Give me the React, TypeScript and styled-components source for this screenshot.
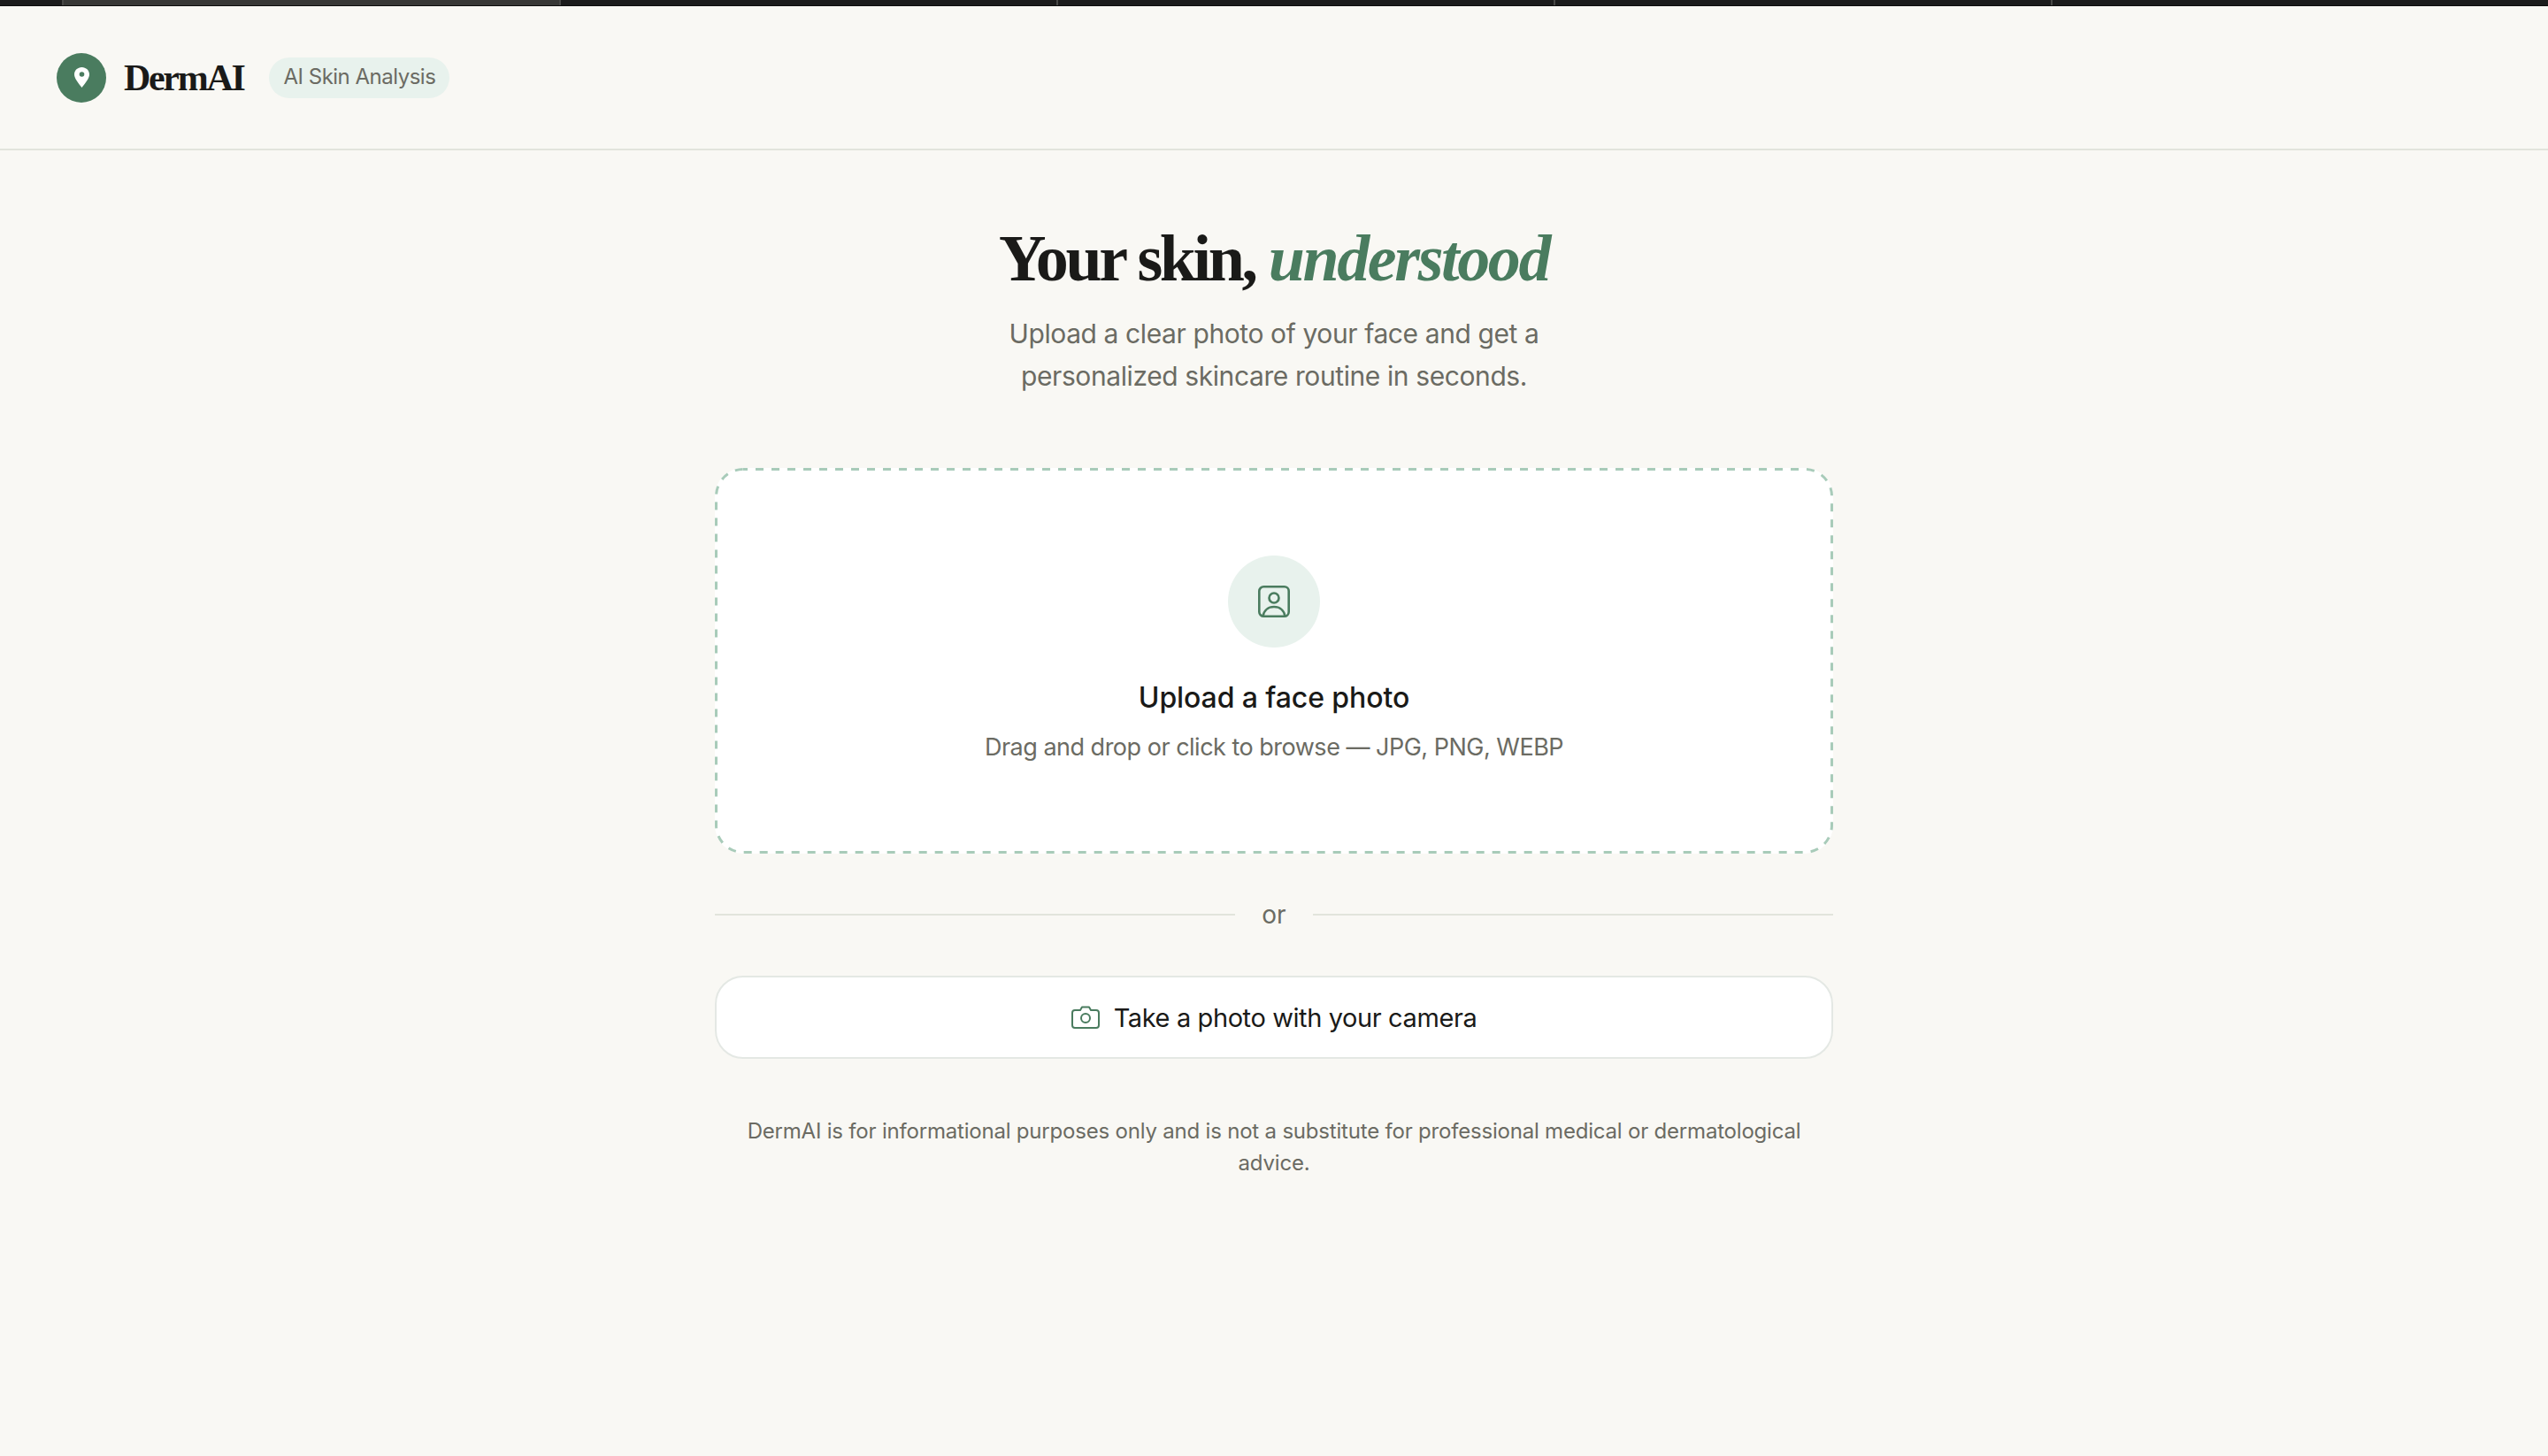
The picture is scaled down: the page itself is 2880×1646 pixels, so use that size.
import React from 'react';
import styled, { createGlobalStyle } from 'styled-components';

const sans = '"Inter", "Noto Sans", sans-serif';
const serif = '"Liberation Serif", "DejaVu Serif", serif';

const App: React.FC = () => {
  return (
    <>
      <GlobalStyle />
      <Page>
        <Progress>
          <Segment $first />
          <Segment $active />
          <Segment />
          <Segment />
          <Segment />
          <Segment />
        </Progress>
        <Header>
          <LogoMark>
            <svg width="17" height="23" viewBox="0 0 17 23">
              <path d="M8.5 0C3.800 0 0 3.600 0 8.200 0 12.500 5 18.500 8.500 23 12 18.500 17 12.500 17 8.200 17 3.600 13.200 0 8.500 0z" fill="#fff" />
              <circle cx="8.500" cy="8" r="2.800" fill="#4a7c5f" />
            </svg>
          </LogoMark>
          <Brand>DermAI</Brand>
          <Badge>AI Skin Analysis</Badge>
        </Header>
        <Main>
          <Heading>
            Your skin, <em>understood</em>
          </Heading>
          <Lead>
            Upload a clear photo of your face and get a
            <br />
            personalized skincare routine in seconds.
          </Lead>
          <DropZone>
            <DashedEdge>
              <rect x="1.500" y="1.500" width="1261" height="433" rx="30.500" />
            </DashedEdge>
            <IconCircle>
              <svg width="36" height="36" viewBox="0 0 36 36" fill="none" stroke="#4a7c5f" strokeWidth="2.600">
                <rect x="1.300" y="1.300" width="33.400" height="33.400" rx="5" />
                <circle cx="18" cy="14" r="5.500" />
                <path d="M5.500 35c1-7 6-11 12.500-11s11.500 4 12.500 11" />
              </svg>
            </IconCircle>
            <DropTitle>Upload a face photo</DropTitle>
            <DropHint>Drag and drop or click to browse — JPG, PNG, WEBP</DropHint>
          </DropZone>
          <Divider>or</Divider>
          <CameraButton>
            <svg width="32" height="26" viewBox="0 0 32 26" fill="none" stroke="#4a7c5f" strokeWidth="2" strokeLinejoin="round">
              <path d="M10 5l2-3.500h8L22 5h6a3 3 0 0 1 3 3v14a3 3 0 0 1-3 3H4a3 3 0 0 1-3-3V8a3 3 0 0 1 3-3z" />
              <circle cx="16" cy="14" r="5" />
            </svg>
            Take a photo with your camera
          </CameraButton>
          <Disclaimer>
            DermAI is for informational purposes only and is not a substitute for professional medical or dermatological advice.
          </Disclaimer>
        </Main>
      </Page>
    </>
  );
};

const GlobalStyle = createGlobalStyle`
  html, body {
    margin: 0;
    padding: 0;
    background: #f9f8f4;
  }
`;

const Page = styled.div`
  min-height: 1646px;
  background: #f9f8f4;
  font-family: ${sans};
  color: #1a1a18;
`;

const Progress = styled.div`
  display: flex;
  box-sizing: border-box;
  height: 7px;
  gap: 2px;
  background: #484846;
  border-bottom: 1px solid #0c0c0c;
`;

const Segment = styled.div<{ $first?: boolean; $active?: boolean }>`
  flex: ${(p) => (p.$first ? '0 0 70px' : '1 1 0')};
  background: ${(p) => (p.$active ? '#383836' : '#1c1c1c')};
`;

const Header = styled.header`
  display: flex;
  align-items: center;
  height: 161px;
  padding: 0 64px;
  border-bottom: 2px solid #e2e4dc;
`;

const LogoMark = styled.div`
  display: flex;
  align-items: center;
  justify-content: center;
  width: 56px;
  height: 56px;
  border-radius: 50%;
  background: #4a7c5f;
`;

const Brand = styled.div`
  margin-left: 20px;
  font-family: ${serif};
  font-weight: 700;
  font-size: 42px;
  letter-spacing: -2.3px;
  color: #1a1a18;
`;

const Badge = styled.div`
  margin-left: 29px;
  padding: 0 16px 2px;
  box-sizing: border-box;
  height: 46px;
  display: flex;
  align-items: center;
  border-radius: 23px;
  background: #e8f2ed;
  font-size: 24px;
  letter-spacing: -0.5px;
  color: #6b6b63;
`;

const Main = styled.main`
  width: 1264px;
  margin: 0 auto;
  display: flex;
  flex-direction: column;
  align-items: center;
`;

const Heading = styled.h1`
  margin: 80px 0 0;
  font-family: ${serif};
  font-size: 74px;
  line-height: 84px;
  font-weight: 700;
  letter-spacing: -3.4px;
  color: #1a1a18;

  em {
    color: #4a7c5f;
    font-style: italic;
    letter-spacing: -2.4px;
  }
`;

const Lead = styled.p`
  margin: 19px 0 0;
  font-size: 30px;
  line-height: 48px;
  letter-spacing: -0.4px;
  text-align: center;
  color: #6b6b63;
`;

const DropZone = styled.div`
  position: relative;
  box-sizing: border-box;
  width: 100%;
  height: 436px;
  margin-top: 80px;
  padding-top: 99px;
  display: flex;
  flex-direction: column;
  align-items: center;
  background: #fff;
  border-radius: 32px;
`;

const DashedEdge = styled.svg`
  position: absolute;
  inset: 0;
  width: 100%;
  height: 100%;
  fill: none;
  stroke: #a8cbb9;
  stroke-width: 3;
  stroke-dasharray: 9 9;
  stroke-dashoffset: 4;
`;

const IconCircle = styled.div`
  display: flex;
  align-items: center;
  justify-content: center;
  width: 104px;
  height: 104px;
  border-radius: 50%;
  background: #e8f2ed;
`;

const DropTitle = styled.div`
  margin-top: 35px;
  font-size: 32px;
  line-height: 44px;
  font-weight: 500;
  letter-spacing: -0.1px;
  color: #1a1a18;
`;

const DropHint = styled.div`
  margin-top: 12px;
  font-size: 27px;
  line-height: 44px;
  letter-spacing: -0.5px;
  color: #6b6b63;
`;

const Divider = styled.div`
  width: 100%;
  margin-top: 51px;
  display: flex;
  align-items: center;
  gap: 30px;
  font-size: 28px;
  line-height: 36px;
  color: #6b6b63;

  &::before,
  &::after {
    content: '';
    flex: 1;
    height: 2px;
    background: #e2e4dc;
  }
`;

const CameraButton = styled.button`
  box-sizing: border-box;
  width: 100%;
  height: 94px;
  margin-top: 51px;
  display: flex;
  align-items: center;
  justify-content: center;
  gap: 16px;
  background: #fff;
  border: 2px solid #e4e8e4;
  border-radius: 32px;
  font-family: ${sans};
  font-size: 29px;
  font-weight: 400;
  letter-spacing: -0.4px;
  color: #1a1a18;
`;

const Disclaimer = styled.p`
  margin: 64px 0 0;
  font-size: 24px;
  line-height: 36px;
  letter-spacing: -0.2px;
  text-align: center;
  color: #6b6b63;
`;

export default App;
